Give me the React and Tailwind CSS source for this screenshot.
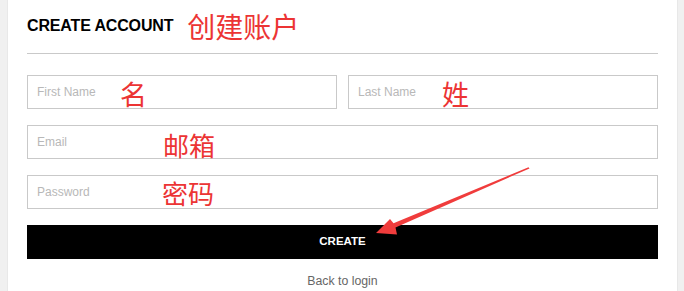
import React from "react";

const sans = { fontFamily: '"Liberation Sans", Arial, sans-serif' };
const cjk = '"Noto Sans CJK SC", "Noto Sans CJK JP", sans-serif';

function Note({ children, className }) {
  return (
    <span
      className={`pointer-events-none absolute whitespace-nowrap leading-none text-[#ec3434] ${className}`}
      style={{ fontFamily: cjk }}
    >
      {children}
    </span>
  );
}

function Field({ placeholder, note, noteClass, type = "text" }) {
  return (
    <div className="relative">
      <input
        type={type}
        placeholder={placeholder}
        className="block h-[34px] w-full border border-[#c9c9c9] bg-white px-[9px] text-[12px] text-[#333] outline-none placeholder:text-[#b8b8b8]"
        style={sans}
      />
      {note && <Note className={noteClass}>{note}</Note>}
    </div>
  );
}

export default function App() {
  return (
    <div className="relative h-[291px] w-[684px] overflow-hidden bg-[#f0f0f0] pl-[7px] pr-[6px]" style={sans}>
      <div className="h-full border-x border-[#e8e8e8] bg-white px-[19px]">
        <div className="flex h-[54px] items-center border-b border-[#c9c9c9] pb-[2px]">
          <h1 className="text-[16px] font-bold leading-none tracking-[-0.15px] text-black">CREATE ACCOUNT</h1>
          <span className="ml-[14px] text-[28px] leading-none text-[#ec3434]" style={{ fontFamily: cjk }}>
            创建账户
          </span>
        </div>
        <form className="mt-[21px] flex flex-col gap-4" onSubmit={(e) => e.preventDefault()}>
          <div className="grid grid-cols-2 gap-[11px]">
            <Field placeholder="First Name" note="名" noteClass="left-[93px] top-[5px] text-[27px]" />
            <Field placeholder="Last Name" note="姓" noteClass="left-[94px] top-[5px] text-[27px]" />
          </div>
          <Field placeholder="Email" note="邮箱" noteClass="left-[136px] top-[7px] text-[26px]" />
          <Field placeholder="Password" type="password" note="密码" noteClass="left-[135px] top-[5px] text-[26px]" />
          <button
            type="submit"
            className="flex h-[34px] w-full items-center justify-center bg-black text-[11.5px] font-bold text-white"
          >
            CREATE
          </button>
        </form>
        <div className="mt-[14px] text-center text-[12.3px] leading-4 text-[#666]">
          <a href="#" className="text-[#666]">Back to login</a>
        </div>
      </div>
      <svg className="pointer-events-none absolute left-0 top-0" width="684" height="291" viewBox="0 0 684 291">
        <polygon
          points="376,233 390,219 393.5,223.3 528.5,167.3 529.5,168.4 395.5,227.4 397,234.5"
          fill="#f03c3c"
        />
      </svg>
    </div>
  );
}
